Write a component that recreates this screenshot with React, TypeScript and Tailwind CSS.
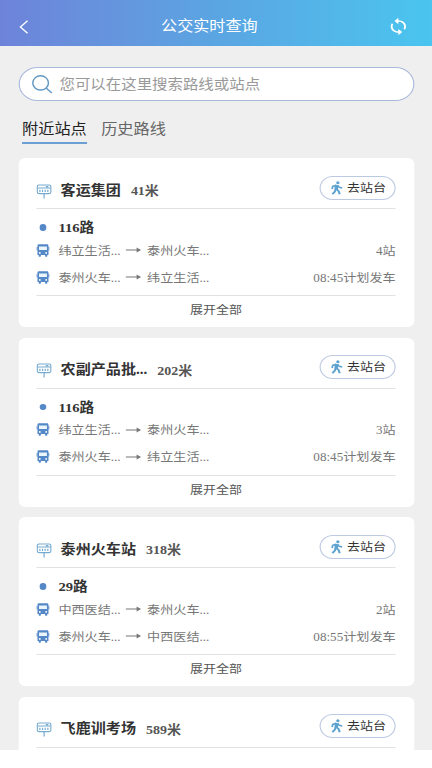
import React, { useState } from "react";

interface Direction {
  from: string;
  to: string;
  status: string;
}

interface Station {
  name: string;
  distance: string;
  line: string;
  directions: Direction[];
}

const stations: Station[] = [
  {
    name: "客运集团",
    distance: "41米",
    line: "116路",
    directions: [
      { from: "纬立生活...", to: "泰州火车...", status: "4站" },
      { from: "泰州火车...", to: "纬立生活...", status: "08:45计划发车" },
    ],
  },
  {
    name: "农副产品批...",
    distance: "202米",
    line: "116路",
    directions: [
      { from: "纬立生活...", to: "泰州火车...", status: "3站" },
      { from: "泰州火车...", to: "纬立生活...", status: "08:45计划发车" },
    ],
  },
  {
    name: "泰州火车站",
    distance: "318米",
    line: "29路",
    directions: [
      { from: "中西医结...", to: "泰州火车...", status: "2站" },
      { from: "泰州火车...", to: "中西医结...", status: "08:55计划发车" },
    ],
  },
  {
    name: "飞鹿训考场",
    distance: "589米",
    line: "29路",
    directions: [],
  },
];

const tabs = ["附近站点", "历史路线"];

const StopIcon = () => (
  <svg
    viewBox="0 0 14 15"
    className="mt-[4px] h-[15px] w-[14px] shrink-0"
    fill="none"
    stroke="#76abd0"
    strokeWidth="1.1"
  >
    <rect x="0.8" y="1" width="12.4" height="8.6" rx="1.6" />
    <path d="M1 4h12M8.5 2.6h2.4M7 9.6v5" />
    <path d="M3.2 8V5.8M5.6 8V5.8M8 8V5.8M10.4 8V5.8" />
  </svg>
);

const BusIcon = () => (
  <svg viewBox="0 0 12 13" className="h-[13px] w-3 shrink-0" fill="#5488c7">
    <path d="M2.4.3h7.2c.9 0 1.4.6 1.4 1.4v9.3H9.9v1.2c0 .3-.2.5-.5.5h-1c-.3 0-.5-.2-.5-.5V11H4.1v1.2c0 .3-.2.5-.5.5h-1c-.3 0-.5-.2-.5-.5V11H1V1.700C1 .9 1.500.3 2.400.3Z" />
    <path d="M.1 3h1v3.5h-1zM10.900 3h1v3.500h-1z" />
    <path fill="#eaf5fc" d="M2.400 2.500h7.200v3.500H2.400z" />
    <circle cx="3.100" cy="8.900" r=".85" fill="#fff" />
    <circle cx="8.900" cy="8.900" r=".85" fill="#fff" />
  </svg>
);

const WalkIcon = () => (
  <svg viewBox="0 0 11 14" className="h-[14px] w-[11px] shrink-0" fill="none" stroke="#5ea3cf">
    <circle cx="6.6" cy="1.7" r="1.5" fill="#5ea3cf" stroke="none" />
    <path d="M5.6 4 5 8.5" strokeWidth="3.2" />
    <path d="M5.2 4.2 2 5.4 1.3 8M6.4 4.5l1.5 1.9 2.7.6" strokeWidth="1.6" />
    <path d="M4.7 8 3.9 10.6 1.6 13.2M5.4 8l1.9 2.2 1 3.1" strokeWidth="1.9" />
  </svg>
);

const ArrowIcon = () => (
  <svg
    viewBox="0 0 14 6"
    className="h-1.5 w-[14px] shrink-0"
    fill="none"
    stroke="#777"
    strokeWidth="1"
  >
    <path d="M0 3h12" />
    <path d="M10 .5 14 3l-4 2.5z" fill="#777" stroke="none" />
  </svg>
);

const StationCard = ({ station }: { station: Station }) => (
  <div className="h-[169px] shrink-0 rounded-md bg-white px-[16.5px]">
    {/* Station name */}
    <div className="flex h-[51px] items-center border-b border-[#e2e2e4] pt-3">
      <StopIcon />
      <h2 className="ml-2 mt-[4px] text-[13.7px] font-bold text-[#333]">{station.name}</h2>
      <span className="ml-[9px] mt-[6px] text-[12.7px] font-bold text-[#555]">
        {station.distance}
      </span>
      <button className="-mt-[3px] ml-auto flex h-[24px] w-[69px] items-center justify-center gap-[4px] rounded-full border border-[#bcc9e2] pl-[1px] text-[11.8px] text-[#333]">
        <WalkIcon />
        <span className="mt-[2px]">去站台</span>
      </button>
    </div>

    {station.directions.length > 0 && (
      <>
        {/* Line and its two directions */}
        <div className="flex h-[87px] flex-col border-b border-[#e2e2e4] pt-[5px]">
          <div className="flex h-[27px] items-center">
            <span className="ml-[3px] h-[6.5px] w-[6px] rounded-full bg-[#5488c7]" />
            <h3 className="ml-[11px] mt-px text-[13.3px] font-bold text-[#333]">{station.line}</h3>
          </div>
          {station.directions.map((direction) => (
            <div
              key={direction.from}
              className="mb-[9px] flex h-[18px] items-center text-[11.9px] text-[#777]"
            >
              <BusIcon />
              <span className="ml-2 mt-[3px] w-[61px]">{direction.from}</span>
              <ArrowIcon />
              <span className="ml-[5.5px] mt-[3px]">{direction.to}</span>
              <span className="ml-auto mt-[3px]">{direction.status}</span>
            </div>
          ))}
        </div>
        <button className="flex h-[30px] w-full items-center justify-center text-[11.8px] text-[#555]">
          展开全部
        </button>
      </>
    )}
  </div>
);

const App = () => {
  const [activeTab, setActiveTab] = useState<string>(tabs[0]);
  const [keyword, setKeyword] = useState<string>("");

  return (
    <div className="h-[768px] w-[432px] overflow-hidden bg-white">
      <div className="flex h-[750px] w-[392px] origin-top-left scale-x-[1.102] flex-col overflow-hidden bg-[#efeff0] font-['Liberation_Serif','Noto_Sans_CJK_SC',sans-serif]">
        {/* Header */}
        <header className="flex h-[46px] shrink-0 items-center justify-between bg-linear-to-r from-[#6d83d9] via-[#5aa5e2] to-[#49c5ef] pl-[17px] pr-5 text-white">
          <svg viewBox="0 0 9 14" className="mt-[7px] h-[14px] w-[9px]" fill="none" stroke="currentColor" strokeWidth="1.2">
            <path d="M8 .8 1.5 7 8 13.200" />
          </svg>
          <h1 className="mt-[8px] pl-[3px] text-[14.6px]">公交实时查询</h1>
          <svg
            viewBox="0 0 24 24"
            className="mt-[7px] h-[19px] w-[21px]"
            fill="currentColor"
            preserveAspectRatio="none"
          >
            <path d="M12 4V1L8 5l4 4V6c3.31 0 6 2.69 6 6 0 1.01-.25 1.97-.7 2.8l1.46 1.46C19.54 15.03 20 13.57 20 12c0-4.42-3.58-8-8-8zm0 14c-3.31 0-6-2.69-6-6 0-1.01.25-1.97.7-2.8L5.24 7.74C4.46 8.97 4 10.43 4 12c0 4.42 3.58 8 8 8v3l4-4-4-4v3z" />
          </svg>
        </header>

        {/* Search */}
        <div className="mx-[16.5px] mt-[21px] flex h-[34px] shrink-0 items-center rounded-full border border-[#a9b9dc] bg-white pl-[10.5px]">
          <svg viewBox="0 0 20 20" className="h-[19px] w-[20px]" fill="none" stroke="#6499c4" strokeWidth="1.4">
            <circle cx="8.8" cy="8.3" r="7.5" />
            <path d="m14 13.7 5.5 5.3" />
          </svg>
          <input
            type="text"
            value={keyword}
            onChange={(e) => setKeyword(e.target.value)}
            placeholder="您可以在这里搜索路线或站点"
            className="ml-1.5 mt-px w-[280px] bg-transparent text-[14px] outline-none placeholder:text-[#999]"
          />
        </div>

        {/* Tabs */}
        <div className="mb-[14px] ml-5 mt-[15px] flex h-[28px] shrink-0 gap-[13px] text-[14.7px]">
          {tabs.map((tab) => (
            <button
              key={tab}
              onClick={() => setActiveTab(tab)}
              className={
                activeTab === tab
                  ? "border-b-2 border-[#6b9fd3] text-[#222]"
                  : "border-b-2 border-transparent pt-px text-[#666]"
              }
            >
              {tab}
            </button>
          ))}
        </div>

        {/* Nearby stations */}
        <div className="mx-[16.5px] flex flex-col gap-[10.5px]">
          {stations.map((station) => (
            <StationCard key={station.name} station={station} />
          ))}
        </div>
      </div>
    </div>
  );
};

export default App;
